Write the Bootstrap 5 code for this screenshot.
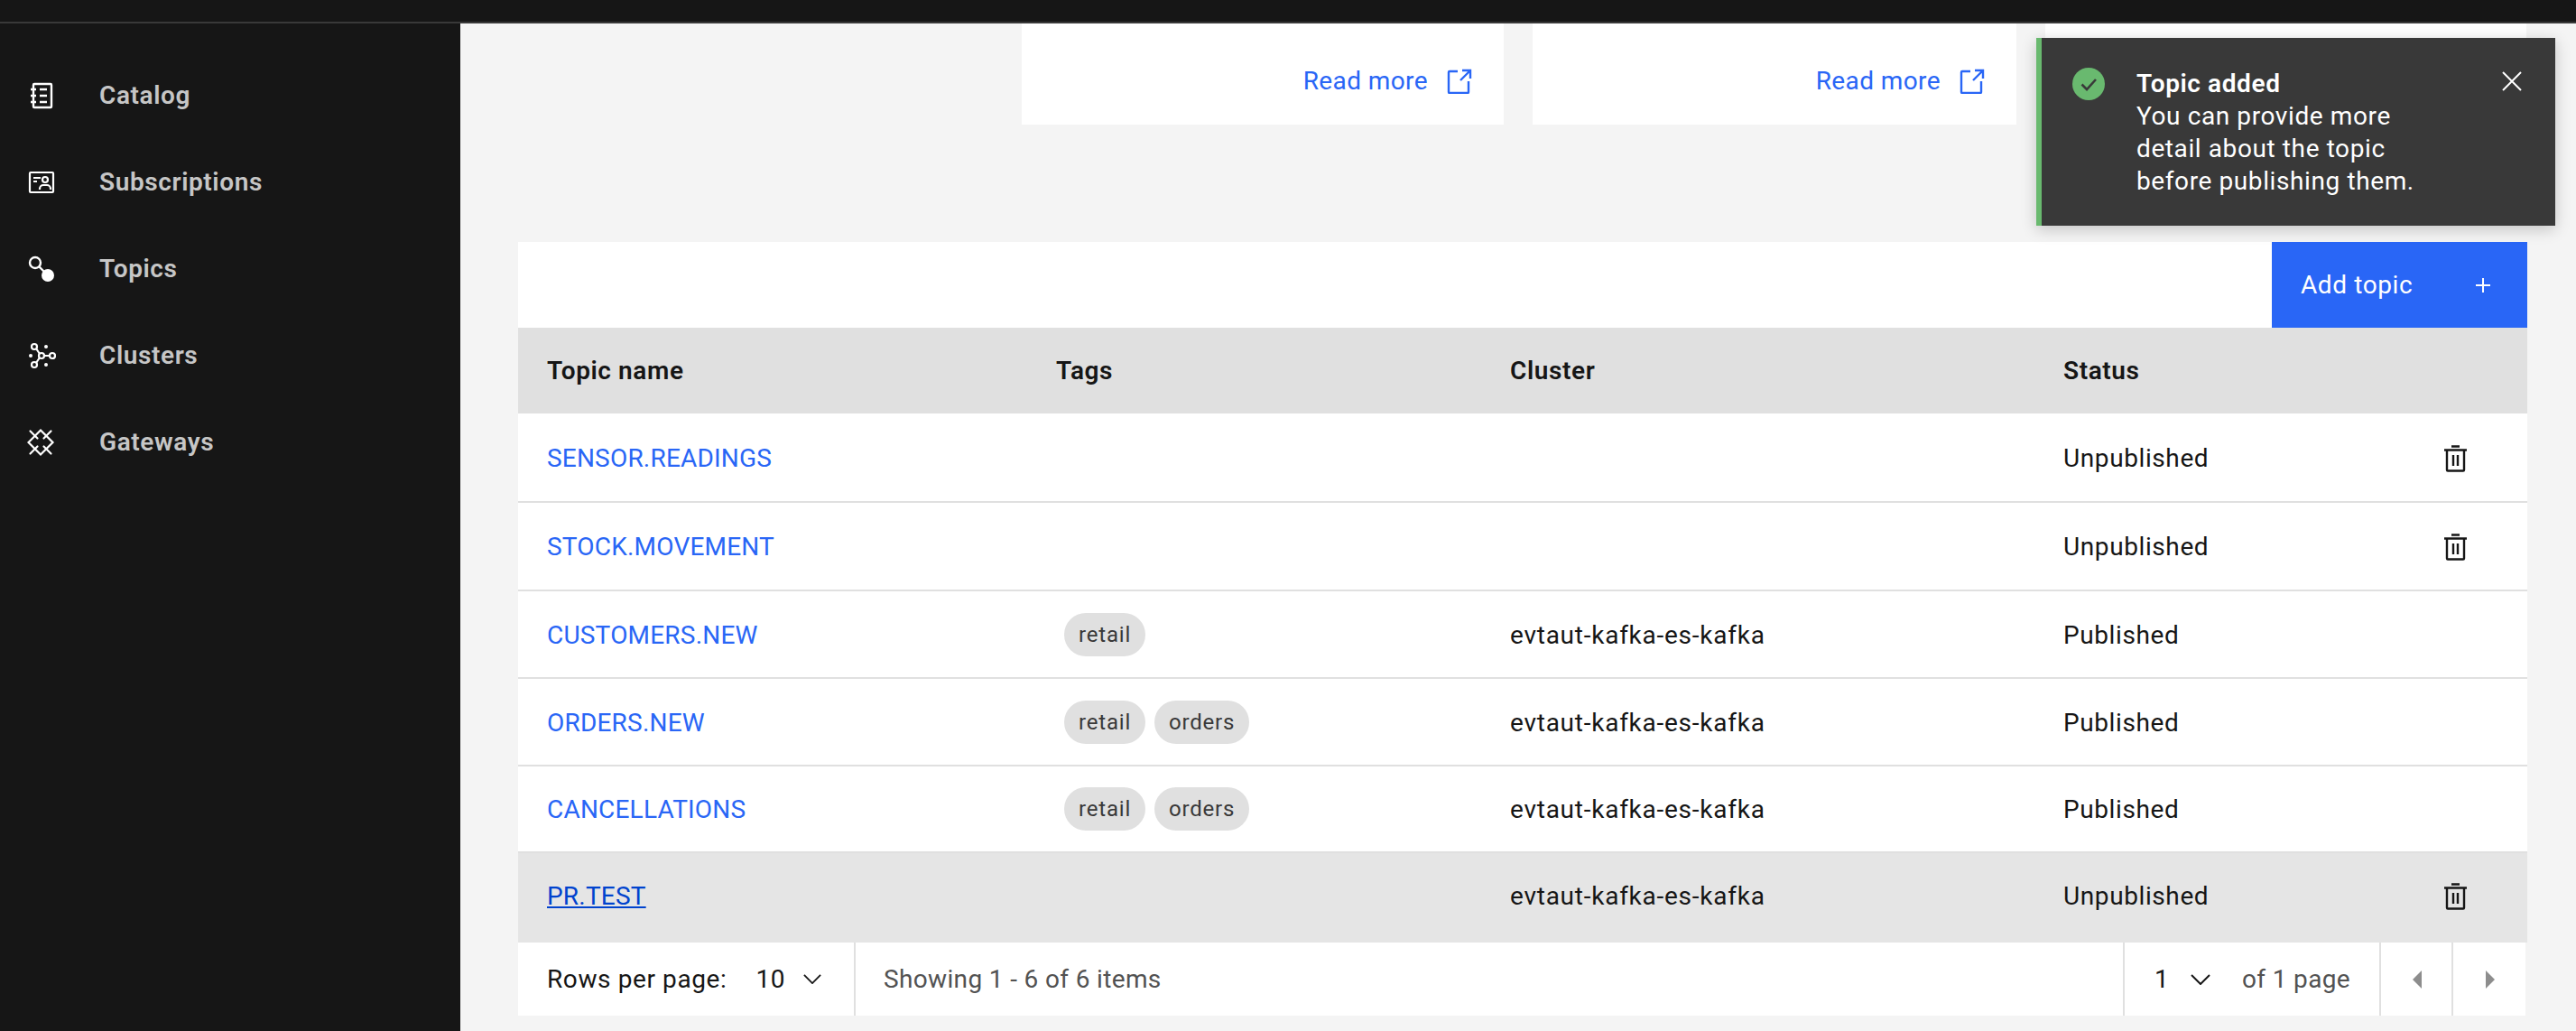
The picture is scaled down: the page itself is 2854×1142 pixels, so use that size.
<!DOCTYPE html>
<html>
<head>
    <meta charset="utf-8" />
    <title>Topics</title>
    <link href="https://cdn.jsdelivr.net/npm/bootstrap@5.3.2/dist/css/bootstrap.min.css" rel="stylesheet">
    <style>
        body { font-family: Roboto, "Liberation Sans", sans-serif; font-size: 28px; letter-spacing: .6px; color: #161616; background: #f4f4f4; height: 1142px; overflow: hidden; }
        a { color: #2966f6; text-decoration: none; }
        svg { display: block; flex: none; }

        .top-strip { height: 26px; background: #161616; border-bottom: 2px solid #393939; }
        .page-body { height: 1116px; }

        .side-nav { width: 510px; background: #161616; padding-top: 32px; }
        .side-item { height: 96px; padding-left: 30px; gap: 48px; color: #c6c6c6; font-weight: 600; }

        .main-area { padding-right: 54px; }
        .info-cards { display: grid; grid-template-columns: 534px 536px 533px; gap: 32px; margin-left: 622px; }
        .info-card { height: 112px; background: #fff; padding: 16px 35px 0 0; gap: 21px; letter-spacing: .4px; }

        .topic-panel { margin: 130px 0 0 64px; }
        .panel-tools { height: 95px; background: #fff; }
        .add-btn { width: 283px; height: 95px; background: #2966f6; color: #fff; border: 0; border-radius: 0; padding: 0 41px 0 32px; font-size: 28px; letter-spacing: .6px; }
        .add-btn:hover { background: #2966f6; color: #fff; }

        .topic-table { table-layout: fixed; margin: 0; width: 2226px; }
        .topic-table > :not(caption) > * > * { padding: 0 0 0 32px; vertical-align: middle; background: #fff; color: #161616; border-bottom: 2px solid #e0e0e0; box-shadow: none; }
        .topic-table thead th { background: #e0e0e0; font-weight: 600; height: 95px; border-bottom: 0; }
        .topic-table > tbody > tr > td { height: 96px; padding-top: 2px; }
        .topic-table > tbody > tr.row-mid > td { height: 97px; }
        .topic-table > tbody > tr.row-tall > td { height: 98px; }
        .topic-table > tbody > tr.row-hover > td { background: #e5e5e5; height: 100px; border-bottom: 0; padding-top: 0; padding-bottom: 3px; }
        .topic-table td a { letter-spacing: .2px; }
        .row-hover a { color: #0043ce; text-decoration: underline; }
        .cluster-name { letter-spacing: .75px; }

        .tag-pill { display: inline-block; height: 48px; line-height: 48px; padding: 0 16px; border-radius: 24px; background: #e0e0e0; color: #393939; font-size: 24px; margin-right: 10px; letter-spacing: .8px; }
        .tag-list { margin-left: 9px; margin-top: -2px; }

        .pager { height: 81px; width: 2224px; background: #fff; }
        .pager-cell { height: 81px; border-right: 2px solid #e0e0e0; }
        .pager-muted { color: #525252; letter-spacing: .35px; }
        .pager-rows { width: 374px; padding-left: 32px; }
        .pager-size { margin-left: 32px; }
        .pager-chevron { margin-left: 20px; }
        .pager-count { padding-left: 31px; border-right: 0; }
        .pager-page { width: 286px; padding-left: 33px; border-left: 2px solid #e0e0e0; }
        .pager-of { margin-right: 32px; }
        .pager-arrow { width: 80px; padding-left: 2px; }
        .pager-arrow-last { width: 80px; padding-left: 2px; border-right: 0; }

        .notice { top: 42px; left: 2256px; width: 575px; height: 208px; background: #393939; color: #fff; border: 0; border-left: 6px solid #69b96f; border-radius: 0; box-shadow: 0 4px 16px rgba(0,0,0,.2); padding: 33px 37px 0 34px; line-height: 36px; font-size: 28px; }
        .notice-title { font-weight: 600; }
        .notice-text { width: 320px; margin-left: 35px; }
    </style>
</head>
<body class="position-relative">

    <div class="top-strip"></div>

    <div class="d-flex page-body">

        <!-- Menu -->
        <nav class="side-nav flex-shrink-0">
            <div class="side-item d-flex align-items-center">
                <svg width="32" height="32" viewBox="0 0 32 32" fill="none" stroke="#fff" stroke-width="2.4"><rect x="7" y="3" width="20" height="26" rx="1"/><path d="M4 9h6M4 16h6M4 23h6M14 9h8M14 16h8M14 23h8"/></svg>
                <span>Catalog</span>
            </div>
            <div class="side-item d-flex align-items-center">
                <svg width="32" height="32" viewBox="0 0 32 32" fill="none" stroke="#fff" stroke-width="2.2"><rect x="3" y="5" width="26" height="22" rx="1"/><path d="M7 11h8M7 15h4"/><circle cx="20" cy="13" r="3"/><path d="M14 24v-1a4 4 0 0 1 4-4h4a4 4 0 0 1 4 4v1"/></svg>
                <span>Subscriptions</span>
            </div>
            <div class="side-item d-flex align-items-center">
                <svg width="32" height="32" viewBox="0 0 32 32" fill="none" stroke="#fff" stroke-width="2.4"><circle cx="9" cy="9" r="6"/><path d="M13 13l8 8"/><circle cx="23" cy="23" r="7" fill="#fff" stroke="none"/></svg>
                <span>Topics</span>
            </div>
            <div class="side-item d-flex align-items-center">
                <svg width="32" height="32" viewBox="0 0 32 32" fill="none" stroke="#fff" stroke-width="2.2"><circle cx="16" cy="16" r="3"/><circle cx="8" cy="6" r="3"/><circle cx="8" cy="26" r="3"/><circle cx="28" cy="16" r="3"/><path d="M10 8l4 6M10 24l4-6M19 16h6"/><circle cx="21" cy="6" r="2" fill="#fff" stroke="none"/><circle cx="21" cy="26" r="2" fill="#fff" stroke="none"/><circle cx="4" cy="16" r="2" fill="#fff" stroke="none"/></svg>
                <span>Clusters</span>
            </div>
            <div class="side-item d-flex align-items-center">
                <svg width="32" height="32" viewBox="0 0 32 32" fill="none" stroke="#fff" stroke-width="2.2" stroke-linecap="round"><path d="M15 2.500L28.500 16 15 29.500 1.500 16z"/><path d="M3.500 3.500l8 8M26.500 3.500l-8 8M3.500 28.500l8-8M26.500 28.500l-8-8"/></svg>
                <span>Gateways</span>
            </div>
        </nav>

        <main class="main-area flex-grow-1">

            <div class="info-cards">
                <div class="info-card d-flex align-items-center justify-content-end">
                    <a href="#">Read more</a>
                    <svg width="28" height="28" viewBox="0 0 28 28" fill="none" stroke="#2966f6" stroke-width="2.4"><path d="M12 3H3a1 1 0 0 0-1 1v22a1 1 0 0 0 1 1h20a1 1 0 0 0 1-1V14"/><path d="M15 13L26 2M17 2h9v9"/></svg>
                </div>
                <div class="info-card d-flex align-items-center justify-content-end">
                    <a href="#">Read more</a>
                    <svg width="28" height="28" viewBox="0 0 28 28" fill="none" stroke="#2966f6" stroke-width="2.4"><path d="M12 3H3a1 1 0 0 0-1 1v22a1 1 0 0 0 1 1h20a1 1 0 0 0 1-1V14"/><path d="M15 13L26 2M17 2h9v9"/></svg>
                </div>
                <div class="info-card"></div>
            </div>

            <div class="topic-panel">
                <div class="panel-tools d-flex justify-content-end">
                    <button class="btn add-btn d-flex align-items-center justify-content-between">
                        Add topic
                        <svg width="16" height="16" viewBox="0 0 16 16" stroke="#fff" stroke-width="2"><path d="M8 0v16M0 8h16"/></svg>
                    </button>
                </div>

                <table class="table topic-table">
                    <colgroup>
                        <col style="width:564px"><col style="width:503px"><col style="width:613px"><col style="width:422px"><col style="width:124px">
                    </colgroup>
                    <thead>
                        <tr><th>Topic name</th><th>Tags</th><th>Cluster</th><th>Status</th><th></th></tr>
                    </thead>
                    <tbody id="topicRows"></tbody>
                </table>

                <div class="pager d-flex">
                    <div class="pager-cell pager-rows d-flex align-items-center">
                        <span>Rows per page:</span>
                        <span class="pager-size">10</span>
                        <svg class="pager-chevron" width="20" height="11" viewBox="0 0 22 12" fill="none" stroke="#161616" stroke-width="2"><path d="M1 1l10 10L21 1"/></svg>
                    </div>
                    <div class="pager-cell pager-count pager-muted flex-grow-1 d-flex align-items-center">Showing 1 - 6 of 6 items</div>
                    <div class="pager-cell pager-page d-flex align-items-center">
                        <span>1</span>
                        <svg class="ms-4" width="22" height="12" viewBox="0 0 22 12" fill="none" stroke="#161616" stroke-width="2"><path d="M1 1l10 10L21 1"/></svg>
                        <span class="pager-muted pager-of ms-auto">of 1 page</span>
                    </div>
                    <div class="pager-cell pager-arrow d-flex align-items-center justify-content-center">
                        <svg width="10" height="20" viewBox="0 0 10 20" fill="#8d8d8d"><path d="M10 0v20L0 10z"/></svg>
                    </div>
                    <div class="pager-cell pager-arrow-last d-flex align-items-center justify-content-center">
                        <svg width="10" height="20" viewBox="0 0 10 20" fill="#8d8d8d"><path d="M0 0v20l10-10z"/></svg>
                    </div>
                </div>
            </div>
        </main>
    </div>

    <!-- Aviso -->
    <div class="toast show notice position-absolute d-flex align-items-start">
        <svg width="36" height="36" viewBox="0 0 36 36"><circle cx="18" cy="18" r="18" fill="#69b96f"/><path d="M10.500 18.500l5.500 5.500 10-11" fill="none" stroke="#393939" stroke-width="2.600"/></svg>
        <div class="notice-text">
            <div class="notice-title">Topic added</div>
            <div>You can provide more detail about the topic before publishing them.</div>
        </div>
        <svg class="ms-auto mt-1" width="22" height="22" viewBox="0 0 22 22" stroke="#fff" stroke-width="2"><path d="M1 1l20 20M21 1L1 21"/></svg>
    </div>

    <script>
        const trash = `<svg width="26" height="30" viewBox="0 0 26 30" fill="none" stroke="#161616" stroke-width="2.400"><path d="M8 1.500h9M0 5.500h25M3 5.500v22a1 1 0 0 0 1 1h17a1 1 0 0 0 1-1v-22M10 11v12M15 11v12"/></svg>`;
        const temas = [
            { nombre: 'SENSOR.READINGS', tags: [], cluster: '', estado: 'Unpublished', fila: 'row-tall' },
            { nombre: 'STOCK.MOVEMENT', tags: [], cluster: '', estado: 'Unpublished', fila: 'row-tall' },
            { nombre: 'CUSTOMERS.NEW', tags: ['retail'], cluster: 'evtaut-kafka-es-kafka', estado: 'Published', fila: 'row-mid' },
            { nombre: 'ORDERS.NEW', tags: ['retail', 'orders'], cluster: 'evtaut-kafka-es-kafka', estado: 'Published', fila: 'row-mid' },
            { nombre: 'CANCELLATIONS', tags: ['retail', 'orders'], cluster: 'evtaut-kafka-es-kafka', estado: 'Published', fila: '' },
            { nombre: 'PR.TEST', tags: [], cluster: 'evtaut-kafka-es-kafka', estado: 'Unpublished', fila: 'row-hover' }
        ];
        document.getElementById('topicRows').innerHTML = temas.map(t => `
            <tr class="${t.fila}">
                <td><a href="#">${t.nombre}</a></td>
                <td><div class="tag-list">${t.tags.map(g => `<span class="tag-pill">${g}</span>`).join('')}</div></td>
                <td class="cluster-name">${t.cluster}</td>
                <td>${t.estado}</td>
                <td>${t.estado === 'Unpublished' ? trash : ''}</td>
            </tr>`).join('');
    </script>

    <script src="https://cdn.jsdelivr.net/npm/bootstrap@5.3.2/dist/js/bootstrap.bundle.min.js"></script>
</body>
</html>
